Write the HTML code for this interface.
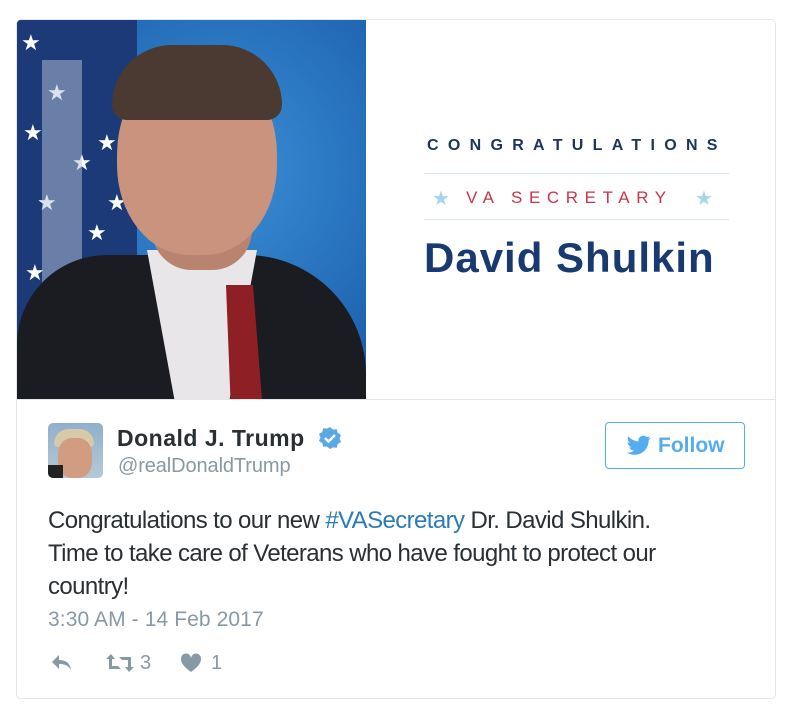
<!DOCTYPE html>
<html><head><meta charset="utf-8"><style>
body{margin:0;background:#fff;width:799px;height:726px;position:relative;font-family:"Liberation Sans",Arial,sans-serif;overflow:hidden}
.card{position:absolute;left:16px;top:19px;width:760px;height:680px;border:1px solid #e1e8ed;border-radius:5px;box-sizing:border-box;overflow:hidden}
.photo{position:absolute;left:0;top:0;width:349px;height:379px;overflow:hidden;background:radial-gradient(ellipse at 60% 40%,#3a8fd6,#1f63b0 70%,#174f95)}
.flag{position:absolute;left:0;top:0;width:120px;height:379px;background:#1d3a78}
.flag i{position:absolute;color:#fff;font-style:normal;font-size:22px}
.right{position:absolute;left:349px;top:0;width:411px;height:379px;background:#fff}
.sep{position:absolute;left:0;top:379px;width:760px;height:1px;background:#e1e8ed}
.t{position:absolute;white-space:nowrap}
</style></head><body>
<div class="card">
 <div class="photo">
  <div class="flag">
   <i style="left:4px;top:10px">★</i><i style="left:30px;top:60px">★</i><i style="left:6px;top:100px">★</i><i style="left:55px;top:130px">★</i><i style="left:20px;top:170px">★</i><i style="left:70px;top:200px">★</i><i style="left:8px;top:240px">★</i><i style="left:45px;top:260px">★</i><i style="left:90px;top:170px">★</i><i style="left:80px;top:110px">★</i>
  </div>
  <div style="position:absolute;left:25px;top:40px;width:40px;height:340px;background:#b8c4d6;opacity:.5"></div>
  <div style="position:absolute;left:0;top:235px;width:349px;height:150px;background:#1b1c22;border-radius:90px 120px 0 0"></div>
  <div style="position:absolute;left:130px;top:230px;width:110px;height:150px;background:#e8e6e8;clip-path:polygon(0 0,100% 0,75% 100%,25% 100%)"></div>
  <div style="position:absolute;left:200px;top:265px;width:45px;height:115px;background:#8e1f24;clip-path:polygon(20% 0,80% 0,100% 100%,30% 100%)"></div>
  <div style="position:absolute;left:135px;top:170px;width:100px;height:80px;background:#b88470;border-radius:0 0 40px 40px"></div>
  <div style="position:absolute;left:100px;top:35px;width:160px;height:200px;background:#c9937d;border-radius:50% 50% 45% 45%"></div>
  <div style="position:absolute;left:95px;top:25px;width:170px;height:75px;background:#4a3a32;border-radius:80px 80px 20px 20px"></div>
 </div>
 <div class="right">
  <div class="t" style="left:61px;top:117px;font-size:16px;font-weight:bold;letter-spacing:9.3px;color:#1d3461">CONGRATULATIONS</div>
  <div style="position:absolute;left:58px;top:153px;width:305px;height:1px;background:#d6e8f4"></div>
  <div class="t" style="left:66px;top:166px;font-size:20px;color:#a8d4ee">★</div>
  <div class="t" style="left:100px;top:168px;font-size:17px;letter-spacing:6.6px;color:#c9354a">VA SECRETARY</div>
  <div class="t" style="left:329px;top:166px;font-size:20px;color:#a8d4ee">★</div>
  <div style="position:absolute;left:58px;top:199px;width:305px;height:1px;background:#d6e8f4"></div>
  <div class="t" style="left:58px;top:214px;font-size:42px;font-weight:bold;color:#183a70;letter-spacing:1px">David Shulkin</div>
 </div>
 <div class="sep"></div>
 <div style="position:absolute;left:31px;top:403px;width:55px;height:55px;border-radius:5px;background:linear-gradient(#8fb0cc,#b6c8d6);overflow:hidden">
  <div style="position:absolute;left:6px;top:6px;width:40px;height:18px;background:#d8c9a8;border-radius:20px 20px 5px 5px"></div>
  <div style="position:absolute;left:10px;top:15px;width:34px;height:40px;background:#d29c80;border-radius:40%"></div>
  <div style="position:absolute;left:0;top:42px;width:15px;height:13px;background:#222"></div>
 </div>
 <div class="t" style="left:100px;top:405px;font-size:23px;font-weight:bold;color:#292f33;letter-spacing:0.5px">Donald J. Trump</div>
 <svg style="position:absolute;left:301px;top:406px" width="24" height="24" viewBox="0 0 24 24"><path d="M12 1l3 2.5 3.8-.3.9 3.7 3.3 2-1.5 3.6 1.5 3.5-3.3 2-.9 3.7-3.8-.3L12 23l-3-2.5-3.8.3-.9-3.7L1 15l1.5-3.5L1 8l3.3-2 .9-3.7 3.8.3z" fill="#5aa8e4"/><path d="M7 12l3.5 3.5L17 9" stroke="#fff" stroke-width="2.4" fill="none"/></svg>
 <div class="t" style="left:101px;top:435px;font-size:20px;color:#8899a6;letter-spacing:-0.1px">@realDonaldTrump</div>
 <div style="position:absolute;left:588px;top:402px;width:140px;height:47px;border:1px solid #55acee;border-radius:4px;box-sizing:border-box"></div>
 <svg style="position:absolute;left:610px;top:415px" width="24" height="21" viewBox="0 0 24 20"><path d="M23.6 2.4c-.9.4-1.8.6-2.8.8 1-.6 1.8-1.6 2.1-2.7-.9.6-2 1-3.1 1.2A4.9 4.9 0 0 0 11.5 6C7.4 5.8 3.8 3.9 1.4.9c-1.3 2.2-.6 5 1.5 6.5-.8 0-1.5-.2-2.2-.6 0 2.4 1.7 4.4 3.9 4.8-.7.2-1.5.2-2.2.1.6 1.9 2.4 3.3 4.6 3.4A9.9 9.9 0 0 1 0 17.1 14 14 0 0 0 7.6 19.3c9.1 0 14.3-7.7 14-14.6 1-.7 1.8-1.5 2-2.3z" fill="#55acee"/></svg>
 <div class="t" style="left:641px;top:414px;font-size:21px;font-weight:bold;color:#55acee">Follow</div>
 <div style="position:absolute;left:31px;top:484px;font-size:24px;line-height:33px;color:#292f33;letter-spacing:-0.6px;width:720px;white-space:nowrap">Congratulations to our new <span style="color:#2b7bb9">#VASecretary</span> Dr. David Shulkin.<br>Time to take care of Veterans who have fought to protect our<br>country!</div>
 <div class="t" style="left:31px;top:588px;font-size:21px;color:#8899a6;letter-spacing:0.1px">3:30 AM - 14 Feb 2017</div>
 <svg style="position:absolute;left:34px;top:634px" width="22" height="18" viewBox="0 0 22 18"><path d="M8 1L1 8l7 7V10c5 0 9 1 12 6-1-7-5-10-12-10z" fill="#8899a6"/></svg>
 <svg style="position:absolute;left:88px;top:633px" width="30" height="20" viewBox="0 0 30 20"><path d="M6 1L1 6h3v10h12l-3-3H7V6h3zM24 19l5-5h-3V4H14l3 3h6v7h-3z" fill="#8899a6"/></svg>
 <div class="t" style="left:123px;top:632px;font-size:20px;color:#8899a6">3</div>
 <svg style="position:absolute;left:163px;top:633px" width="22" height="20" viewBox="0 0 22 20"><path d="M11 19C4 14 1 10 1 6a5 5 0 0 1 10-1 5 5 0 0 1 10 1c0 4-3 8-10 13z" fill="#8899a6"/></svg>
 <div class="t" style="left:194px;top:632px;font-size:20px;color:#8899a6">1</div>
</div>
</body></html>
